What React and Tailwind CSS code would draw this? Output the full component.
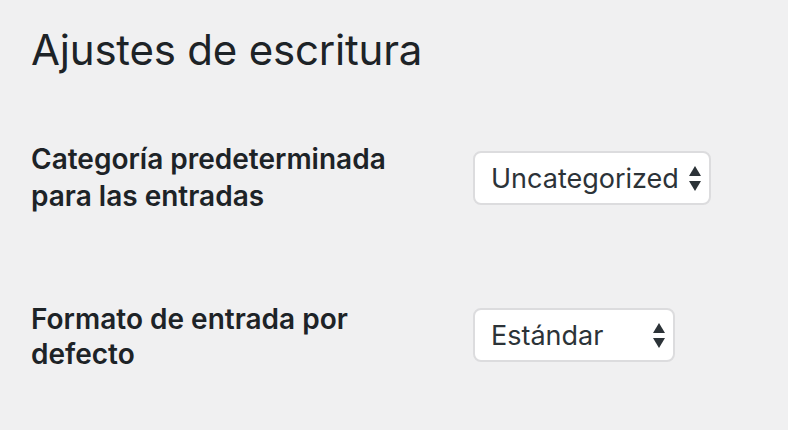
const Arrows = () => (
  <svg width="12" height="25" viewBox="0 0 12 25" className="shrink-0">
    <path d="M6 0 L12 10 L0 10 Z" fill="#2c3338" />
    <path d="M0 15 L12 15 L6 25 Z" fill="#2c3338" />
  </svg>
);

const Select = ({ value, width, offset }) => (
  <div
    className={`flex items-center justify-between h-[54px] pl-[16px] pr-[8px] bg-white border-2 border-[#dcdcde] rounded-[8px] ${width} ${offset}`}
  >
    <span className="text-[27px] text-[#2c3338] leading-none">{value}</span>
    <Arrows />
  </div>
);

export default function App() {
  return (
    <div
      className="w-[788px] h-[430px] bg-[#f0f0f1] text-[#1d2327] pl-[31px] overflow-hidden"
      style={{ fontFamily: "Inter, 'Noto Sans', sans-serif" }}
    >
      <h1 className="pt-[24px] text-[42px] font-normal leading-[52px] tracking-[-0.2px]">
        Ajustes de escritura
      </h1>
      <div className="mt-[65px] flex items-start">
        <div className="w-[442px] text-[28px] font-semibold leading-[37px]">
          Categoría predeterminada
          <br />
          para las entradas
        </div>
        <Select value="Uncategorized" width="w-[238px]" offset="mt-[10px]" />
      </div>
      <div className="mt-[87px] flex items-start">
        <div className="w-[442px] text-[28px] font-semibold leading-[35px]">
          Formato de entrada por
          <br />
          defecto
        </div>
        <Select value="Estándar" width="w-[202px]" offset="mt-[6px]" />
      </div>
    </div>
  );
}
